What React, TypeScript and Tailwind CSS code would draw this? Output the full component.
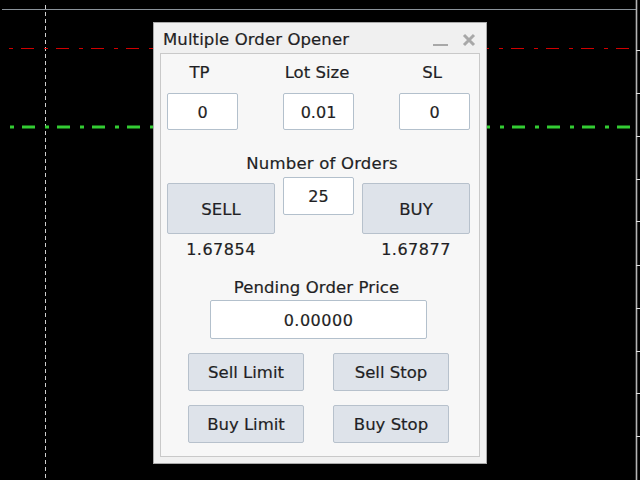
import React from "react";

const font = { fontFamily: '"DejaVu Sans", Verdana, sans-serif' };

function Chart() {
  const ticks = [50, 93, 136, 179, 221, 265, 308, 351, 393, 436];
  return (
    <svg className="absolute inset-0" width="640" height="480" viewBox="0 0 640 480">
      <line x1="2" y1="9.5" x2="636" y2="9.5" stroke="#8a929a" strokeWidth="1" />
      <line x1="636.5" y1="0" x2="636.5" y2="480" stroke="#b4b4b4" strokeWidth="1.6" />
      {ticks.map((t) => (
        <line key={t} x1="636" y1={t + 0.5} x2="640" y2={t + 0.5} stroke="#e0e0e0" strokeWidth="1" />
      ))}
      <line x1="45.5" y1="5" x2="45.5" y2="480" stroke="#cfcfcf" strokeWidth="1" strokeDasharray="4 3" />
      <line x1="9" y1="48.5" x2="636" y2="48.5" stroke="#d00000" strokeWidth="1" strokeDasharray="4 8 13 10" />
      <line x1="10" y1="127" x2="636" y2="127" stroke="#33cc33" strokeWidth="3" strokeDasharray="4 8 13 10" />
    </svg>
  );
}

function Input({ value, className }: { value: string; className: string }) {
  return (
    <div
      className={`flex items-center justify-center pt-[2px] bg-white border border-[#b3c0cc] rounded-[2px] text-[16px] text-[#1f1f24] [-webkit-text-stroke:0.2px_#1f1f24] ${className}`}
    >
      {value}
    </div>
  );
}

function Btn({ label, className }: { label: string; className: string }) {
  return (
    <div
      className={`flex items-center justify-center pt-[3px] bg-[#dee3ea] border border-[#b7c1cc] rounded-[2px] text-[16.5px] text-[#1f1f24] [-webkit-text-stroke:0.2px_#1f1f24] ${className}`}
    >
      {label}
    </div>
  );
}

const label = "h-[20px] flex items-center justify-center pt-[3px] text-[16.5px] [-webkit-text-stroke:0.2px_#1f1f24]";

export default function App() {
  return (
    <div className="relative w-[640px] h-[480px] bg-black overflow-hidden" style={font}>
      <Chart />
      <div className="absolute left-[153px] top-[22px] w-[334px] h-[442px] bg-[#f0f0f0] border border-[#a9a9a9] flex flex-col">
        <div className="h-[30px] flex items-center pt-[4px] pl-[9px] pr-[10px] shrink-0">
          <span className="text-[16.5px] text-[#1f1f24] leading-none tracking-[0.1px] [-webkit-text-stroke:0.2px_#1f1f24]">
            Multiple Order Opener
          </span>
          <div className="ml-auto flex items-center gap-[14px]">
            <svg width="15" height="14" viewBox="0 0 15 14">
              <rect x="0" y="11" width="15" height="2" fill="#a8a8a8" />
            </svg>
            <svg width="14" height="14" viewBox="0 0 14 14">
              <path d="M2 2 L12 12 M12 2 L2 12" stroke="#a8a8a8" strokeWidth="3" />
            </svg>
          </div>
        </div>
        <div className="mx-[6px] mb-[6px] flex-1 bg-[#f7f7f7] border border-[#c9c9c9] flex flex-col text-[#1f1f24]">
          <div className="pt-[8px] pl-[6px] grid grid-cols-[71px_71px_71px] gap-x-[45px]">
            <div className={`${label} pr-[6px]`}>TP</div>
            <div className={`${label} pr-[3px]`}>Lot Size</div>
            <div className={`${label} pr-[5px]`}>SL</div>
            <Input value="0" className="mt-[11px] h-[37px]" />
            <Input value="0.01" className="mt-[11px] h-[37px]" />
            <Input value="0" className="mt-[11px] h-[37px]" />
          </div>
          <div className={`mt-[23px] ${label} pl-[4px] tracking-[0.2px]`}>Number of Orders</div>
          <div className="mt-[4px] pl-[6px] flex gap-[8px] items-start">
            <div className="w-[108px] flex flex-col items-center">
              <Btn label="SELL" className="mt-[6px] w-[108px] h-[51px]" />
              <div className={`mt-[4px] ${label} tracking-[0.5px] text-[16px]`}>1.67854</div>
            </div>
            <Input value="25" className="w-[71px] h-[38px]" />
            <div className="w-[108px] flex flex-col items-center">
              <Btn label="BUY" className="mt-[6px] w-[108px] h-[51px]" />
              <div className={`mt-[4px] ${label} tracking-[0.5px] text-[16px]`}>1.67877</div>
            </div>
          </div>
          <div className={`mt-[19px] ${label} pr-[7px] tracking-[0.1px]`}>Pending Order Price</div>
          <div className="mt-[3px] pl-[49px]">
            <Input value="0.00000" className="w-[217px] h-[39px] tracking-[0.5px]" />
          </div>
          <div className="mt-[14px] pl-[27px] grid grid-cols-[116px_116px] gap-x-[29px] gap-y-[14px]">
            <Btn label="Sell Limit" className="h-[38px]" />
            <Btn label="Sell Stop" className="h-[38px]" />
            <Btn label="Buy Limit" className="h-[38px]" />
            <Btn label="Buy Stop" className="h-[38px]" />
          </div>
        </div>
      </div>
    </div>
  );
}
